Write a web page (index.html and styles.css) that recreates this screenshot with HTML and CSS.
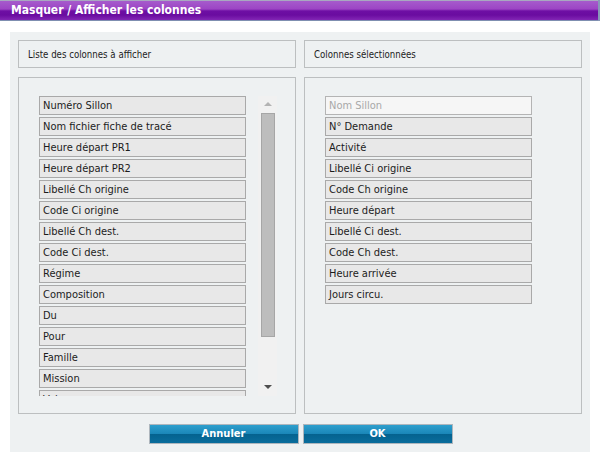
FILE: index.html
```html
<!DOCTYPE html>
<html lang="fr">
<head>
<meta charset="utf-8">
<title>Masquer / Afficher les colonnes</title>
<link rel="stylesheet" href="styles.css">
</head>
<body>
<div class="titlebar">Masquer / Afficher les colonnes</div>
<div class="panel">
  <div class="columns">
    <div class="col">
      <div class="colhead">Liste des colonnes à afficher</div>
      <div class="colbody">
        <div class="scrollwrap">
          <ul class="list">
            <li class="item">Numéro Sillon</li>
            <li class="item">Nom fichier fiche de tracé</li>
            <li class="item">Heure départ PR1</li>
            <li class="item">Heure départ PR2</li>
            <li class="item">Libellé Ch origine</li>
            <li class="item">Code Ci origine</li>
            <li class="item">Libellé Ch dest.</li>
            <li class="item">Code Ci dest.</li>
            <li class="item">Régime</li>
            <li class="item">Composition</li>
            <li class="item">Du</li>
            <li class="item">Pour</li>
            <li class="item">Famille</li>
            <li class="item">Mission</li>
            <li class="item">Voie</li>
          </ul>
          <div class="scrollbar">
            <span class="arrow up"></span>
            <span class="thumb"></span>
            <span class="arrow down"></span>
          </div>
        </div>
      </div>
    </div>
    <div class="col">
      <div class="colhead">Colonnes sélectionnées</div>
      <div class="colbody">
        <ul class="list">
          <li class="item disabled">Nom Sillon</li>
          <li class="item">N° Demande</li>
          <li class="item">Activité</li>
          <li class="item">Libellé Ci origine</li>
          <li class="item">Code Ch origine</li>
          <li class="item">Heure départ</li>
          <li class="item">Libellé Ci dest.</li>
          <li class="item">Code Ch dest.</li>
          <li class="item">Heure arrivée</li>
          <li class="item">Jours circu.</li>
        </ul>
      </div>
    </div>
  </div>
  <div class="buttons">
    <button class="btn">Annuler</button>
    <button class="btn">OK</button>
  </div>
</div>
</body>
</html>
```
FILE: styles.css
```css
* { box-sizing: border-box; }
html, body { margin: 0; padding: 0; background: #ffffff; }
body {
  font-family: "DejaVu Sans Condensed", "DejaVu Sans", sans-serif;
  color: #1c1c1c;
  width: 600px;
  height: 463px;
  overflow: hidden;
}
.titlebar {
  height: 21px;
  padding-left: 11px;
  line-height: 20px;
  font-size: 12px;
  font-weight: bold;
  color: #ffffff;
  background: linear-gradient(#a8a8c0 0, #a8a8c0 1px, #a65bcc 1px, #9c45c4 9px, #6e0fa4 11px, #6a0ca0 15px, #8226b4 20px, #7f8fb0 20px, #7f8fb0 21px);
  border-right: 2px solid #8898b8;
}
.panel {
  margin: 11px 10px 0 10px;
  height: 420px;
  padding: 8px 8px 9px;
  background: #eef1f2;
}
.columns {
  display: grid;
  grid-template-columns: 278px 278px;
  gap: 8px;
}
.col {
  display: flex;
  flex-direction: column;
  gap: 9px;
}
.colhead {
  height: 28px;
  border: 1px solid #bcbfc0;
  padding-left: 9px;
  line-height: 27px;
  font-size: 9.6px;
}
.colbody {
  height: 337px;
  border: 1px solid #bcbfc0;
  padding: 18px 0 0 20px;
}
.scrollwrap {
  display: flex;
  align-items: flex-start;
}
.list {
  list-style: none;
  margin: 0;
  padding: 0;
  width: 207px;
  height: 300px;
  overflow: hidden;
}
.item {
  height: 19px;
  margin-bottom: 2px;
  border: 1px solid #a9a9a9;
  background: #e8e8e8;
  padding-left: 3px;
  line-height: 18px;
  font-size: 11px;
  white-space: nowrap;
}
.item.disabled {
  background: #f6f6f6;
  color: #a8a8a8;
  border-color: #b4b4b4;
}
.scrollbar {
  width: 19px;
  height: 300px;
  margin-left: 12px;
  background: #f1f1f1;
  display: flex;
  flex-direction: column;
  align-items: center;
  padding-top: 6px;
}
.arrow {
  display: block;
  width: 0;
  height: 0;
  border-left: 4px solid transparent;
  border-right: 4px solid transparent;
}
.arrow.up {
  border-bottom: 4px solid #b3b3b3;
}
.thumb {
  display: block;
  width: 14px;
  height: 224px;
  margin-top: 7px;
  margin-left: 1px;
  background: #bdbdbd;
  border: 1px solid #a6a6a6;
}
.arrow.down {
  margin-top: 48px;
  border-top: 4px solid #4e4e4e;
}
.buttons {
  display: flex;
  justify-content: center;
  gap: 4px;
  margin-top: 10px;
  padding-left: 1px;
}
.btn {
  width: 150px;
  height: 20px;
  padding: 0;
  border: 1px solid #aeb6bd;
  background: linear-gradient(#2e9fcd 0%, #1a86b8 50%, #04628f 50%, #0a6d9c 100%);
  color: #ffffff;
  font-family: "DejaVu Sans Condensed", "DejaVu Sans", sans-serif;
  font-size: 11px;
  font-weight: bold;
  line-height: 18px;
  cursor: pointer;
}
```
